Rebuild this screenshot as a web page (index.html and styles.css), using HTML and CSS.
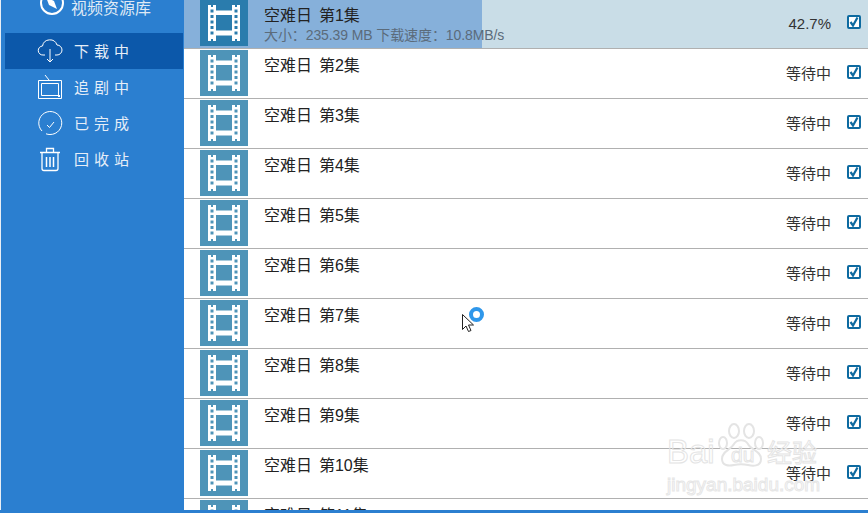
FILE: index.html
```html
<!DOCTYPE html>
<html>
<head>
  <title>下载中</title>
  <link rel="stylesheet" href="styles.css">
</head>

<body>

<svg class="defs" width="0" height="0">
  <symbol id="film" viewBox="0 0 48 46">
    <path fill="#fff" fill-rule="evenodd" d="M8 5h3v2h2V5h3v5.500h16V5h3v2h2V5h3v36h-3v-2h-2v2h-3v-5.500H16V41h-3v-2h-2v2H8zM16 15v15.500h16V15zM10.500 9.500v3h3v-3zM10.500 15v3h3v-3zM10.500 20.500v3h3v-3zM10.500 26v3h3v-3zM10.500 31.500v3h3v-3zM34.500 9.500v3h3v-3zM34.500 15v3h3v-3zM34.500 20.500v3h3v-3zM34.500 26v3h3v-3zM34.500 31.500v3h3v-3z"/>
  </symbol>
  <symbol id="tick" viewBox="0 0 10 10">
    <path d="M1.500 5l2.500 3.500L8.500 .5" fill="none" stroke="#0d6aa0" stroke-width="2.200"/>
  </symbol>
</svg>

<div class="app">
  <div class="sidebar">
    <div class="brand">
      <svg class="brand-icon" width="26" height="26" viewBox="0 0 26 26">
        <circle cx="13" cy="8" r="11" fill="none" stroke="#fff" stroke-width="2"/>
        <path fill="#fff" d="M7 2l8 4 3 8-8-4z"/>
      </svg>
      <span>视频资源库</span>
    </div>

    <ul class="menu">
      <li class="menu-item active">
        <svg width="26" height="26" viewBox="0 0 26 26" fill="none" stroke="#fff">
          <path d="M8 17H6a4.500 4.500 0 0 1-.500-9 7.500 7.500 0 0 1 14.500-1 4.800 4.800 0 0 1 0 10h-2"/>
          <path d="M13 11v13M10 21l3 3 3-3"/>
        </svg>
        <span>下载中</span>
      </li>
      <li class="menu-item">
        <svg width="26" height="26" viewBox="0 0 26 26" fill="none" stroke="#fff">
          <path d="M1.500 6.500h23v18h-23z"/>
          <path d="M4.500 9.500h17v12h-17zM8 1l4 5"/>
          <path stroke-width="2" d="M21 22h2"/>
        </svg>
        <span>追剧中</span>
      </li>
      <li class="menu-item">
        <svg width="26" height="26" viewBox="0 0 26 26" fill="none" stroke="#fff">
          <path d="M5 21a11.500 11.500 0 1 1 8 3.500 11 11 0 0 1-4-.7"/>
          <path d="M10 15l2.500 2.500L17 12"/>
        </svg>
        <span>已完成</span>
      </li>
      <li class="menu-item">
        <svg width="26" height="26" viewBox="0 0 26 26" fill="none" stroke="#fff" stroke-width="1.300">
          <path d="M3 6.500h20M9.500 6V2.500h7V6M5 7v15.500a2 2 0 0 0 2 2h12a2 2 0 0 0 2-2V7"/>
          <path d="M9.500 11v10M13 11v10M16.500 11v10" stroke-width="1.500"/>
        </svg>
        <span>回收站</span>
      </li>
    </ul>
  </div>

  <div class="list">
    <div class="row row-active">
      <div class="progress" style="width: 298px"></div>
      <svg class="thumb" width="48" height="46"><use href="#film"/></svg>
      <div class="info">
        <div class="name">空难日 第1集</div>
        <div class="meta">大小：235.39 MB 下载速度：10.8MB/s</div>
      </div>
      <div class="status">42.7%</div>
      <span class="check"><svg width="10" height="10"><use href="#tick"/></svg></span>
    </div>
    <div class="row">
      <svg class="thumb" width="48" height="46"><use href="#film"/></svg>
      <div class="info"><div class="name">空难日 第2集</div></div>
      <div class="status">等待中</div>
      <span class="check"><svg width="10" height="10"><use href="#tick"/></svg></span>
    </div>
    <div class="row">
      <svg class="thumb" width="48" height="46"><use href="#film"/></svg>
      <div class="info"><div class="name">空难日 第3集</div></div>
      <div class="status">等待中</div>
      <span class="check"><svg width="10" height="10"><use href="#tick"/></svg></span>
    </div>
    <div class="row">
      <svg class="thumb" width="48" height="46"><use href="#film"/></svg>
      <div class="info"><div class="name">空难日 第4集</div></div>
      <div class="status">等待中</div>
      <span class="check"><svg width="10" height="10"><use href="#tick"/></svg></span>
    </div>
    <div class="row">
      <svg class="thumb" width="48" height="46"><use href="#film"/></svg>
      <div class="info"><div class="name">空难日 第5集</div></div>
      <div class="status">等待中</div>
      <span class="check"><svg width="10" height="10"><use href="#tick"/></svg></span>
    </div>
    <div class="row">
      <svg class="thumb" width="48" height="46"><use href="#film"/></svg>
      <div class="info"><div class="name">空难日 第6集</div></div>
      <div class="status">等待中</div>
      <span class="check"><svg width="10" height="10"><use href="#tick"/></svg></span>
    </div>
    <div class="row">
      <svg class="thumb" width="48" height="46"><use href="#film"/></svg>
      <div class="info"><div class="name">空难日 第7集</div></div>
      <div class="status">等待中</div>
      <span class="check"><svg width="10" height="10"><use href="#tick"/></svg></span>
    </div>
    <div class="row">
      <svg class="thumb" width="48" height="46"><use href="#film"/></svg>
      <div class="info"><div class="name">空难日 第8集</div></div>
      <div class="status">等待中</div>
      <span class="check"><svg width="10" height="10"><use href="#tick"/></svg></span>
    </div>
    <div class="row">
      <svg class="thumb" width="48" height="46"><use href="#film"/></svg>
      <div class="info"><div class="name">空难日 第9集</div></div>
      <div class="status">等待中</div>
      <span class="check"><svg width="10" height="10"><use href="#tick"/></svg></span>
    </div>
    <div class="row">
      <svg class="thumb" width="48" height="46"><use href="#film"/></svg>
      <div class="info"><div class="name">空难日 第10集</div></div>
      <div class="status">等待中</div>
      <span class="check"><svg width="10" height="10"><use href="#tick"/></svg></span>
    </div>
    <div class="row">
      <svg class="thumb" width="48" height="46"><use href="#film"/></svg>
      <div class="info"><div class="name">空难日 第11集</div></div>
    </div>
  </div>
</div>
<div class="bottom-bar"></div>

<!-- mouse cursor with busy ring -->
<svg class="cursor" width="24" height="26" viewBox="0 0 24 26">
  <path d="M1.500 7.500v15l3.500-3.500 2.500 5.500 2.500-1-2.500-5.500h5z" fill="#fff" stroke="#222"/>
  <circle cx="15.500" cy="7.500" r="5.500" fill="none" stroke="#2f97ea" stroke-width="4"/>
</svg>

<!-- watermark -->
<div class="watermark">
  <div class="wm-top">
    <span class="wm-bai">Bai</span>
    <svg class="wm-paw" width="46" height="44" viewBox="0 0 46 44" fill="none" stroke="#e4e4e4" stroke-width="2">
      <ellipse cx="5" cy="20" rx="4" ry="6"/>
      <ellipse cx="16" cy="8" rx="5" ry="7"/>
      <ellipse cx="31" cy="8" rx="5" ry="7"/>
      <ellipse cx="41" cy="20" rx="4" ry="6"/>
      <path d="M4 36c0-8 9-9 12-15 3-5 11-5 14 0 3 6 13 7 13 15 0 8-9 7-13 6-5-1-9-1-14 0-5 1-12 1-12-6z"/>
    </svg>
    <span class="wm-du">du</span>
    <span class="wm-cn">经验</span>
  </div>
  <div class="wm-url">jingyan.baidu.com</div>
</div>

</body>
</html>
```

FILE: styles.css
```css
*{
  box-sizing: border-box;
}

html, body{
  height: 100%;
}

body{
  margin: 0;
  background-color: #fff;
  font-family: "Liberation Sans", "Noto Sans CJK SC", sans-serif;
  overflow: hidden;
  position: relative;
}

.defs{
  position: absolute;
}

.app{
  display: flex;
  height: 510px;
  overflow: hidden;
}

.bottom-bar{
  height: 3px;
  background-color: #2b7fd0;
}

/* sidebar */
.sidebar{
  width: 184px;
  flex-shrink: 0;
  background-color: #2b7fd0;
  border-left: 1px solid #e8eef5;
  color: #fff;
  padding: 0 1px 0 4px;
}

.brand{
  display: flex;
  align-items: flex-start;
  height: 33px;
  padding-left: 34px;
  font-size: 16px;
  line-height: 17px;
  color: #dfe9f5;
}

.brand-icon{
  margin-right: 6px;
  margin-top: -5px;
}

.menu{
  list-style: none;
  margin: 0;
  padding: 0;
}

.menu-item{
  display: flex;
  align-items: center;
  height: 36px;
  padding-left: 32px;
  font-size: 15px;
  letter-spacing: 5px;
  color: #e6eef8;
}

.menu-item svg{
  margin-right: 11px;
}

.menu-item span{
  margin-bottom: 2px;
}

.menu-item.active{
  background-color: #0c58aa;
}

/* download list */
.list{
  flex: 1;
  min-width: 0;
}

.row{
  position: relative;
  display: flex;
  align-items: flex-start;
  height: 50px;
  padding-left: 16px;
  border-bottom: 1px solid #b0b0b0;
}

.row-active{
  margin-top: -1px;
  background-color: #c9dde7;
}

.progress{
  position: absolute;
  left: 0;
  top: 0;
  bottom: 0;
  background-color: #86b0da;
}

.thumb{
  position: relative;
  flex-shrink: 0;
  margin-top: 1px;
  background-color: #4e94b8;
}

.row-active .thumb{
  background-color: #2a7cad;
}

.info{
  position: relative;
  flex: 1;
  padding-left: 16px;
  padding-top: 8px;
}

.name{
  font-size: 16px;
  line-height: 18px;
  word-spacing: 2.500px;
  color: #222;
}

.meta{
  margin-top: 1px;
  font-size: 14px;
  line-height: 18px;
  letter-spacing: -0.100px;
  white-space: nowrap;
  color: #5b6b7a;
}

.status{
  position: relative;
  width: 60px;
  margin-top: 16px;
  text-align: right;
  font-size: 15px;
  line-height: 18px;
  color: #333;
}

.check{
  position: relative;
  display: flex;
  align-items: center;
  justify-content: center;
  width: 14px;
  height: 14px;
  margin: 16px 7px 0 16px;
  border: 2px solid #0d6aa0;
  border-radius: 2px;
  background-color: #fff;
}

/* overlays */
.cursor{
  position: absolute;
  left: 461px;
  top: 307px;
}

.watermark{
  position: absolute;
  left: 667px;
  top: 423px;
  width: 170px;
  color: transparent;
  pointer-events: none;
}

.wm-top{
  position: relative;
  display: flex;
  align-items: flex-end;
  height: 44px;
}

.wm-top span{
  -webkit-text-stroke: 1px #e4e4e4;
  white-space: nowrap;
}

.wm-bai{
  width: 51px;
  font-size: 33px;
  line-height: 30px;
}

.wm-paw{
  flex-shrink: 0;
  margin-right: 3px;
}

.wm-top .wm-du{
  position: absolute;
  left: 64px;
  top: 20px;
  font-size: 21px;
  line-height: 24px;
}

.wm-cn{
  font-size: 25px;
  line-height: 28px;
}

.wm-url{
  margin-top: 8px;
  font-size: 19px;
  line-height: 20px;
  white-space: nowrap;
  -webkit-text-stroke: 1px #e6e6e6;
}
```
